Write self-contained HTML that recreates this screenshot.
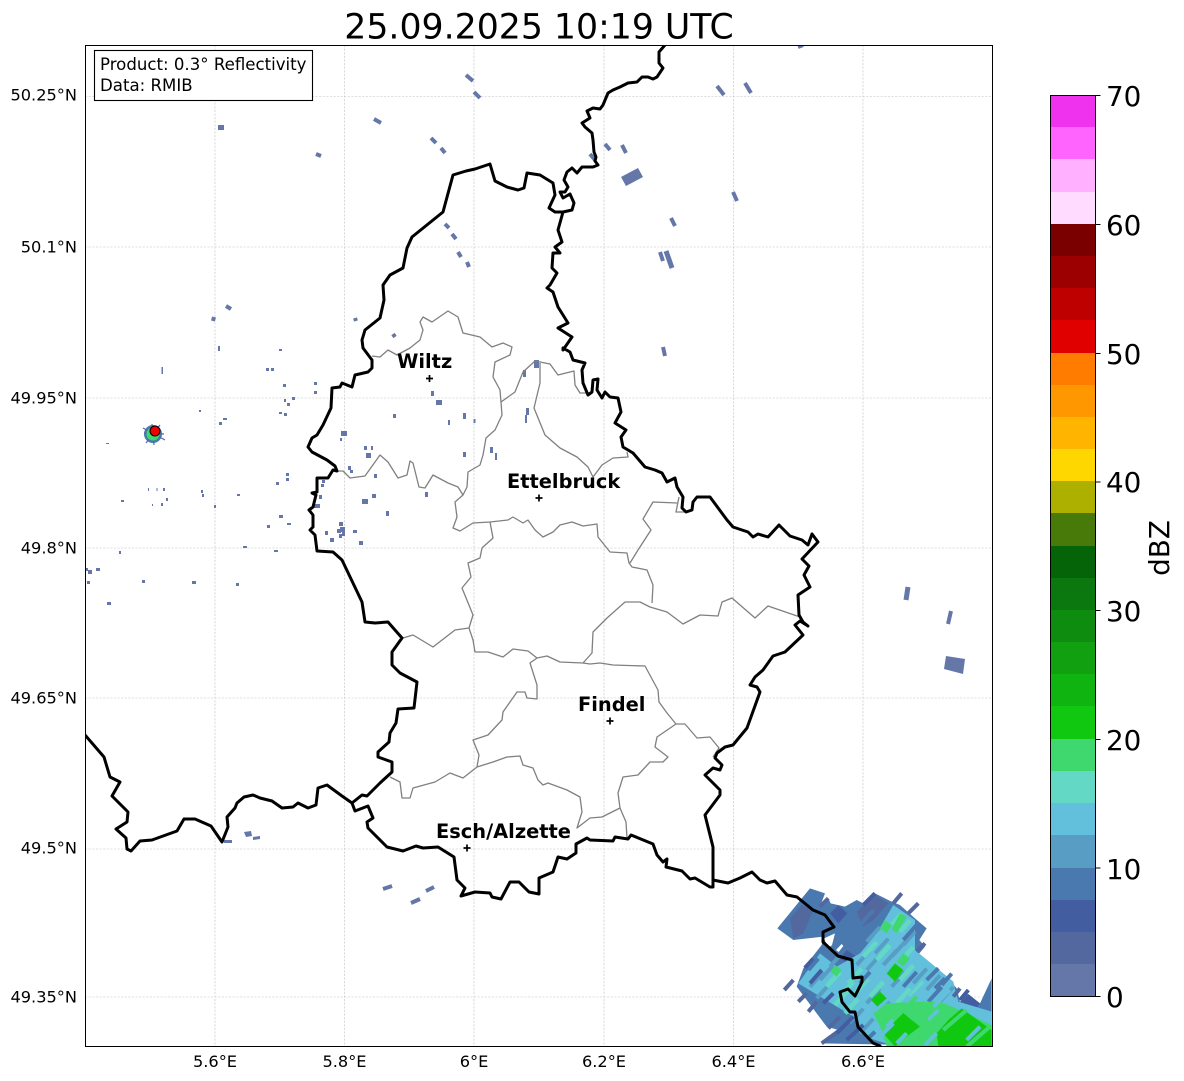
<!DOCTYPE html>
<html><head><meta charset="utf-8"><title>Radar</title>
<style>html,body{margin:0;padding:0;background:#fff}svg{display:block}text{font-family:"DejaVu Sans",sans-serif;fill:#000}</style></head>
<body>
<svg width="1184" height="1081" viewBox="0 0 1184 1081" xmlns="http://www.w3.org/2000/svg">
<defs><clipPath id="c"><rect x="85" y="45" width="907" height="1001"/></clipPath></defs>
<rect width="1184" height="1081" fill="#fff"/>
<text x="539" y="38.500" font-size="34.700" text-anchor="middle">25.09.2025 10:19 UTC</text>
<g clip-path="url(#c)">
<!-- grid -->
<g stroke="#c2c2c2" stroke-width=".6" stroke-dasharray="2.200 1.400" fill="none">
<path d="M215,45V1046M344.500,45V1046M474,45V1046M604,45V1046M733.500,45V1046M863,45V1046"/>
<path d="M85,96.500H992M85,247H992M85,398H992M85,548H992M85,698H992M85,849H992M85,997H992"/>
</g>
<!-- speckles -->
<g fill="#6577a8">
<rect x="218" y="125" width="6" height="5"/>
<path d="M621,177 638,168 643,177 626,186Z"/>
<path d="M946,656 965,659 963,674 944,669Z"/>
<g>
<rect x="218" y="346" width="2" height="5"/><rect x="279" y="349" width="3" height="2"/><rect x="266" y="368" width="3" height="3"/><rect x="271" y="368" width="3" height="3"/><rect x="283" y="384" width="3" height="3"/><rect x="314" y="382" width="3" height="3"/><rect x="314" y="391" width="3" height="3"/><rect x="292" y="397" width="3" height="3"/><rect x="284" y="399" width="2" height="3"/><rect x="287" y="403" width="3" height="3"/><rect x="279" y="412" width="3" height="2"/><rect x="284" y="413" width="3" height="3"/><rect x="199" y="410" width="2" height="2"/><rect x="223" y="418" width="4" height="2"/><rect x="219" y="422" width="3" height="3"/><rect x="161.500" y="367" width="1.500" height="7"/><rect x="106" y="443" width="3" height="1"/>
<rect x="341" y="431" width="6" height="5"/><rect x="340" y="438" width="2" height="3"/><rect x="364" y="446" width="3" height="4"/><rect x="371" y="446" width="2" height="4"/><rect x="366" y="453" width="5" height="5"/><rect x="348" y="466" width="3" height="4"/><rect x="350" y="470" width="3" height="3"/><rect x="374" y="474" width="3" height="4"/><rect x="322" y="480" width="3" height="3"/><rect x="321" y="484" width="3" height="3"/><rect x="286" y="473" width="3" height="3"/><rect x="286" y="478" width="3" height="3"/><rect x="276" y="482" width="3" height="3"/><rect x="319" y="495" width="3" height="4"/><rect x="372" y="494" width="4" height="4"/><rect x="362" y="499" width="6" height="5"/><rect x="314" y="504" width="6" height="4"/><rect x="279" y="515" width="4" height="3"/><rect x="267" y="525" width="3" height="3"/><rect x="287" y="523" width="4" height="2"/>
<rect x="339" y="522" width="4" height="4"/><rect x="337" y="529" width="4" height="4"/><rect x="340" y="527" width="5" height="5"/><rect x="342" y="532" width="3" height="4"/><rect x="339" y="534" width="3" height="4"/><rect x="325" y="531" width="3" height="4"/><rect x="330" y="538" width="4" height="4"/><rect x="353" y="530" width="4" height="3"/><rect x="359" y="541" width="4" height="4"/>
<rect x="237" y="494" width="3" height="2"/><rect x="201" y="490" width="2" height="3"/><rect x="202" y="494" width="2" height="3"/><rect x="121" y="500" width="3" height="2"/><rect x="166" y="498" width="2" height="3"/><rect x="161" y="503" width="2" height="3"/><rect x="163" y="488" width="2" height="3"/><rect x="156.500" y="488" width="1" height="3"/><rect x="148" y="488" width="1" height="3"/><rect x="152" y="504" width="1" height="2"/><rect x="214" y="505" width="2" height="3"/><rect x="243" y="546" width="4" height="2"/><rect x="274" y="550" width="4" height="2"/><rect x="119" y="551" width="2" height="3"/>
<rect x="85" y="568" width="3" height="3"/><rect x="88" y="570" width="4" height="4"/><rect x="96" y="568" width="4" height="3"/><rect x="87" y="581" width="3" height="3"/><rect x="107" y="602" width="4" height="3"/><rect x="142" y="580" width="3" height="3"/><rect x="192" y="581" width="4" height="3"/><rect x="236" y="583" width="3" height="3"/>
<rect x="431" y="391" width="3" height="5"/><rect x="436" y="400" width="6" height="5"/><rect x="393" y="414" width="3" height="4"/><rect x="448" y="420" width="2" height="5"/><rect x="463" y="413" width="3" height="6"/><rect x="473.500" y="419" width="2" height="4"/><rect x="463" y="452" width="3" height="5"/><rect x="490" y="447" width="3" height="6"/><rect x="495" y="453" width="2" height="7"/><rect x="425" y="492" width="3" height="5"/><rect x="386" y="511" width="3" height="5"/><rect x="523" y="370" width="3" height="7"/><rect x="534" y="360" width="5" height="8"/><rect x="526" y="408" width="3" height="7"/><rect x="525" y="415" width="2" height="8"/>
<rect x="224" y="840" width="8" height="3"/><path d="M244,832 251,831 252,836 246,837Z"/><path d="M253,837 260,836 260,839 253,840Z"/>
</g>
</g>
<g stroke="#6577a8" fill="none" stroke-width="4">
<path d="M316,154 321,156M374,119 381,123M226,306 231,309M214,317 213,321M355,318 356,321M466,75 473,81M474,92 480,98M431,138 436,143M441,148 445,153M445,224 449,228M452,234 456,239M458,252 461,257M467,262 469,267M393,334 395,337M590,154 595,160M605,144 610,150M622,145 626,153M671,218 675,226M660,252 663,261M663,347 665,356M798,47 803,45M717,86 724,95M745,83 751,93M733,192 737,201M383,889 392,886M411,903 420,899M426,891 434,887"/>
<path d="M908,587 906,600" stroke-width="5"/><path d="M951,611 948,624" stroke-width="4"/><path d="M666,251 672,268" stroke-width="5"/>
</g>
<!-- single radar echo -->
<g>
<circle cx="153" cy="434" r="9" fill="#4a79b0"/>
<path d="M143,428 165,440M146,443 160,425M144,433 164,434M152,424 154,445" stroke="#52689f" stroke-width="1.200"/>
<circle cx="153" cy="434" r="6.500" fill="#3fd86f"/>
</g>
<!-- weather blob -->
<g transform="translate(760 870) scale(.33333)">
<path d="M150,55 195,70 180,110 205,85 212,100 255,110 290,90 310,100 345,70 395,95 420,105 465,145 500,175 478,210 495,230 470,260 560,320 590,355 600,395 620,370 660,400 695,325 695,530 185,520 235,480 200,470 110,350 130,295 185,225 190,200 100,210 52,175Z" fill="#4a79b0"/>
<g fill="#435ea0"><path d="M210,130 235,105 262,130 235,160Z"/><path d="M130,290 155,262 195,295 170,320Z"/><path d="M340,335 365,305 395,345 365,370Z"/><path d="M465,295 490,275 525,310 495,335Z"/><path d="M555,360 575,335 595,365 570,390Z"/><path d="M600,400 625,372 660,400 640,425Z"/><path d="M260,240 290,260 270,285 240,265Z"/></g>
<g fill="#52689f"><path d="M90,145 125,105 160,120 130,190 100,205Z"/><path d="M290,125 345,75 385,100 340,150 310,170Z"/></g>
<path d="M400,105 465,150 465,240 580,335 595,395 695,425 695,530 410,530 330,505 280,440 115,340 180,250 230,290 300,250 350,190Z" fill="#63c0dc"/>
<g fill="none" stroke-linecap="butt">
<path stroke="#589dc4" stroke-width="12" d="M320,215l40,-44M345,250l40,-44M370,285l40,-44M395,260l40,-44M430,225l35,-40M290,285l40,-44M320,300l40,-44M150,350l40,-44M180,330l40,-44M210,290l30,-34M170,385l40,-44M320,400l40,-44M350,440l40,-44M395,350l40,-44M460,340l40,-44M500,360l40,-44M540,395l40,-44M270,460l40,-44M300,490l40,-44"/>
<path stroke="#63d8c4" stroke-width="14" d="M350,270l40,-44M310,260l40,-44M265,340l40,-44M240,380l40,-44M200,350l40,-44M285,370l40,-44M330,380l40,-44M410,400l40,-44M450,380l40,-44M375,440l40,-44M420,330l40,-44M430,265l30,-34M420,185l30,-34M395,165l30,-34M225,405l40,-44M255,430l40,-44"/>
<path stroke="#4a79b0" stroke-width="12" d="M300,165l40,-44M330,180l40,-44M275,245l40,-44M255,215l40,-44M145,300l30,-34M300,340l30,-34M430,350l40,-44M505,395l40,-44M545,345l30,-34M255,490l35,-38M315,515l30,-30"/>
</g>
<g fill="#3fd86f"><path d="M375,150 395,165 380,190 360,175Z"/><path d="M225,285 245,300 230,320 212,305Z"/><path d="M420,130 440,140 410,190 395,175Z"/><path d="M430,250 450,265 430,290 410,275Z"/><path d="M365,480 340,430 380,400 470,395 540,395 600,420 695,465 695,530 380,530Z"/></g>
<g fill="#10c810"><path d="M405,280 430,300 405,335 380,310Z"/><path d="M360,365 380,385 352,410 333,390Z"/><path d="M425,425 455,450 480,470 440,500 405,530 370,490Z"/><path d="M605,415 695,480 695,530 535,530 530,490 565,450Z"/></g>
<g fill="none" stroke-width="12">
<path d="M73,360 100,330M115,395 140,370M145,425 170,395M205,475 240,440M400,100 425,70M445,130 475,100M180,110 205,85M470,245 495,220M580,380 600,355M185,520 240,480" stroke="#52689f"/>
<path d="M430,210 470,165M500,330 535,295M525,355 555,325" stroke="#4a79b0"/>
<path d="M380,470 450,400M440,400 500,340M520,410 570,360M350,510 400,460M410,520 440,490M495,525 530,490M505,450 535,420M620,510 660,470" stroke="#63c0dc"/>
<path d="M460,510 530,440M400,450 470,380M550,480 620,420M620,530 690,470" stroke="#3fd86f"/>
<path d="M345,70 310,105M230,490 280,440M260,510 310,465M190,400 220,370M150,340 185,300M600,390 625,360" stroke="#435ea0"/>
</g>
<path d="M192,205 225,190 216,225 205,235Z" fill="#fff"/>
<path d="M228,240 245,222 250,228 236,246Z" fill="#fff"/>
</g>
<!-- communes -->
<g fill="none" stroke="#808080" stroke-width="1.300" stroke-linejoin="round">
<path d="M337,471 343,471 350,478 365,476 380,455 388,462 398,478 407,475 410,461 413,463 419,487 425,488 433,475 448,483 458,487 463,495 467,487 468,472 480,465 483,455 486,438 495,430 502,415 501,402 500,390 493,377 495,362 510,355 512,347 503,343 492,347 480,337 463,333 458,317 448,311 432,322 423,317 420,322 423,330 420,340 410,348 397,355 388,350 380,357 372,356"/>
<path d="M463,495 455,502 457,517 453,528 460,531 473,523 490,522 508,520 513,517 523,523 528,520 535,530 543,537 553,532 560,525 572,522 583,526 597,524 598,537 610,552 627,553 629,563 632,567 647,570 653,585 652,603"/>
<path d="M501,402 515,392 523,372 535,361 550,364 558,375 574,371 575,385 580,393 590,393"/>
<path d="M540,363 540,383 534,408 545,435 560,448 577,457 588,467 593,477 602,465 613,458 628,457 627,452"/>
<path d="M679,497 676,512 686,512M677,503 653,502 643,519 651,530 638,550 630,563"/>
<path d="M490,522 493,538 482,548 480,558 468,563 471,577 462,588 473,615 469,628 455,630 433,647 413,635 403,638"/>
<path d="M469,628 473,640 475,652 488,652 503,657 513,649 528,651 537,658 547,656 560,662 583,663 592,653 593,632 607,618 625,602 640,602 650,607 667,612 683,624 700,615 718,616 722,602 732,598 755,618 768,606 800,617"/>
<path d="M537,658 530,663 537,685 537,699 527,698 525,692 517,692 503,712 502,720 488,735 473,740 479,755 477,767 463,778 450,773 435,782 413,788 410,798 402,798 400,782 390,777"/>
<path d="M477,767 493,762 507,757 520,756 523,765 533,768 538,780 543,785 548,783 567,790 580,797 582,812 577,828 590,818 602,817 620,808 626,822 627,838"/>
<path d="M620,808 618,793 623,777 638,775 650,762 663,762 668,757 655,747 657,737 676,724 685,724 697,738 710,737 719,748 713,757"/>
<path d="M676,724 667,713 659,702 658,690 645,666 613,665 600,663 590,664 583,663"/>
</g>
<!-- national borders -->
<g fill="none" stroke="#000" stroke-width="3" stroke-linejoin="round" stroke-linecap="round">
<path d="M665,45 659,52 659,63 663,68 657,77 653,79 648,77 642,77 637,82 628,83 620,87 613,90 608,93 603,105 600,109 593,108 587,111 590,118 582,123 585,127 592,133 593,140 594,152 596,157 595,161 598,165 593,167 582,167 577,173 572,168 567,172 564,180 568,187 565,192 560,192 563,198 570,194 574,203 572,210 563,212 555,212 549,208 555,195 553,183 540,175 527,173 524,188 518,190 507,187 495,181 490,164 475,169 466,171 453,175 443,212 412,237 407,248 403,268 390,275 383,285 384,300 380,318 365,330 362,340 363,348 372,360 372,368 368,372 355,375 353,383 352,387 342,383 340,387 332,388 331,408 323,425 317,435 312,438 308,447 312,452 327,460 335,466 337,471 333,470 328,478 317,478 317,492 312,493 316,495 313,507 309,510 313,515 313,527 310,530 315,535 317,551 333,552 342,560 362,602 365,622 375,623 388,622 402,638 392,652 392,665 400,673 417,682 414,708 398,709 396,723 390,733 389,742 378,752 378,757 392,762 392,772 380,783 367,796 362,795 352,803 355,811 368,806 373,818 367,822 368,828 387,847 403,851 416,846 423,848 438,847 454,857 457,880 465,888 461,896 475,892 490,893 492,897 501,899 510,882 519,882 529,892 539,894 539,878 553,872 558,857 567,859 576,853 576,844 587,838 590,840 613,841 615,837 628,839 631,835 653,844 657,855 663,862 667,859 666,867 682,871 690,879 695,878 710,887 713,887 713,847 705,815 720,795 720,790 705,775 713,768 720,770 722,765 715,758 717,753 725,747 733,745 747,728 760,692 757,687 750,685 755,677 763,670 773,656 785,652 803,635 795,625 800,621 808,626 803,622 799,615 798,595 810,587 804,575 809,566 802,559 818,542 812,534 808,545 802,540 790,536 779,525 768,537 758,534 753,537 748,532 733,527 727,520 710,497 697,497 693,502 692,510 686,512 682,508 683,497 677,487 675,478 667,482 662,473 655,470 645,467 633,453 623,447 621,437 626,430 615,423 621,412 618,398 610,397 605,392 602,398 597,390 598,379 593,380 592,392 588,395 583,383 582,370 585,363 573,360 570,352 563,348 563,350 572,337 558,328 568,323 558,307 553,292 547,288 550,285 557,273 552,268 553,253 560,253 555,247 562,242 558,230 563,212"/>
<path d="M352,803 342,796 327,785 318,788 316,805 308,808 298,803 293,807 282,808 272,801 260,798 253,795 244,797 237,803 235,808 227,817 228,827 222,842 211,826 195,819 184,819 177,831 152,840 140,841 131,851 127,849 126,838 116,829 127,822 128,812 112,796 120,782 110,777 104,757 85,735"/>
<path d="M713,880 728,883 740,878 752,872 760,880 767,883 775,881 787,895 797,897 813,910 825,915 834,927 823,932 823,942 838,956 852,960 853,978 862,977 862,982 855,996 848,989 840,992 842,1002 850,1012 855,1012 858,1027 873,1043 880,1046"/>
</g>
<!-- radar marker -->
<circle cx="155" cy="431" r="5" fill="#f00000" stroke="#000" stroke-width="1"/>
<!-- city marks -->
<g stroke="#000" stroke-width="1.700" fill="none">
<path d="M426,378.500h7M429.500,375v7M535.500,498h7M539,494.500v7M606.500,721h7M610,717.500v7M463.500,848h7M467,844.500v7"/>
</g>
<g font-size="19.400" font-weight="700">
<text x="397" y="368">Wiltz</text>
<text x="507" y="488">Ettelbruck</text>
<text x="578" y="711">Findel</text>
<text x="436" y="838">Esch/Alzette</text>
</g>
</g>
<!-- frame -->
<rect x="85.500" y="45.500" width="907" height="1001" fill="none" stroke="#000" stroke-width="1"/>
<!-- legend -->
<rect x="94.500" y="50.500" width="218" height="50" fill="#fff" stroke="#000" stroke-width="1.100"/>
<g font-size="16.600">
<text x="100" y="70">Product: 0.3° Reflectivity</text>
<text x="100" y="91">Data: RMIB</text>
</g>
<!-- axis labels -->
<g font-size="16.200" text-anchor="end">
<text x="77" y="100.500">50.25°N</text>
<text x="77" y="252.500">50.1°N</text>
<text x="77" y="403.500">49.95°N</text>
<text x="77" y="553.500">49.8°N</text>
<text x="77" y="703.500">49.65°N</text>
<text x="77" y="853.500">49.5°N</text>
<text x="77" y="1002.500">49.35°N</text>
</g>
<g font-size="16.200" text-anchor="middle">
<text x="215" y="1067">5.6°E</text>
<text x="344.500" y="1067">5.8°E</text>
<text x="474" y="1067">6°E</text>
<text x="604" y="1067">6.2°E</text>
<text x="733.500" y="1067">6.4°E</text>
<text x="863" y="1067">6.6°E</text>
</g>
<!-- colorbar -->
<g>
<rect x="1050.500" y="95" width="45" height="32" fill="#ee32ee"/>
<rect x="1050.500" y="127" width="45" height="32" fill="#ff64ff"/>
<rect x="1050.500" y="159" width="45" height="33" fill="#ffb0ff"/>
<rect x="1050.500" y="192" width="45" height="32" fill="#ffdcff"/>
<rect x="1050.500" y="224" width="45" height="32" fill="#7a0000"/>
<rect x="1050.500" y="256" width="45" height="32" fill="#9c0000"/>
<rect x="1050.500" y="288" width="45" height="32" fill="#be0000"/>
<rect x="1050.500" y="320" width="45" height="33" fill="#e00000"/>
<rect x="1050.500" y="353" width="45" height="32" fill="#ff7c00"/>
<rect x="1050.500" y="385" width="45" height="32" fill="#ff9800"/>
<rect x="1050.500" y="417" width="45" height="32" fill="#ffb400"/>
<rect x="1050.500" y="449" width="45" height="32" fill="#ffd700"/>
<rect x="1050.500" y="481" width="45" height="32" fill="#aeb000"/>
<rect x="1050.500" y="513" width="45" height="33" fill="#477a08"/>
<rect x="1050.500" y="546" width="45" height="32" fill="#066408"/>
<rect x="1050.500" y="578" width="45" height="32" fill="#0a780e"/>
<rect x="1050.500" y="610" width="45" height="32" fill="#0e8c10"/>
<rect x="1050.500" y="642" width="45" height="32" fill="#10a010"/>
<rect x="1050.500" y="674" width="45" height="32" fill="#10b410"/>
<rect x="1050.500" y="706" width="45" height="33" fill="#10c810"/>
<rect x="1050.500" y="739" width="45" height="32" fill="#3fd86f"/>
<rect x="1050.500" y="771" width="45" height="32" fill="#63d8c4"/>
<rect x="1050.500" y="803" width="45" height="32" fill="#63c0dc"/>
<rect x="1050.500" y="835" width="45" height="33" fill="#589dc4"/>
<rect x="1050.500" y="868" width="45" height="32" fill="#4a79b0"/>
<rect x="1050.500" y="900" width="45" height="32" fill="#435ea0"/>
<rect x="1050.500" y="932" width="45" height="32" fill="#52689f"/>
<rect x="1050.500" y="964" width="45" height="32" fill="#6577a8"/>
<rect x="1050.500" y="95.500" width="45" height="901" fill="none" stroke="#000" stroke-width="1"/>
<path d="M1095.500,95.500h5M1095.500,224.500h5M1095.500,353.500h5M1095.500,482h5M1095.500,610.500h5M1095.500,739.500h5M1095.500,868h5M1095.500,996.500h5" stroke="#000" stroke-width="1"/>
</g>
<g font-size="27.800">
<text x="1106" y="106">70</text>
<text x="1106" y="235">60</text>
<text x="1106" y="364">50</text>
<text x="1106" y="492">40</text>
<text x="1106" y="621">30</text>
<text x="1106" y="750">20</text>
<text x="1106" y="879">10</text>
<text x="1106" y="1007">0</text>
<text transform="translate(1169,548) rotate(-90)" text-anchor="middle">dBZ</text>
</g>
</svg>
</body></html>
